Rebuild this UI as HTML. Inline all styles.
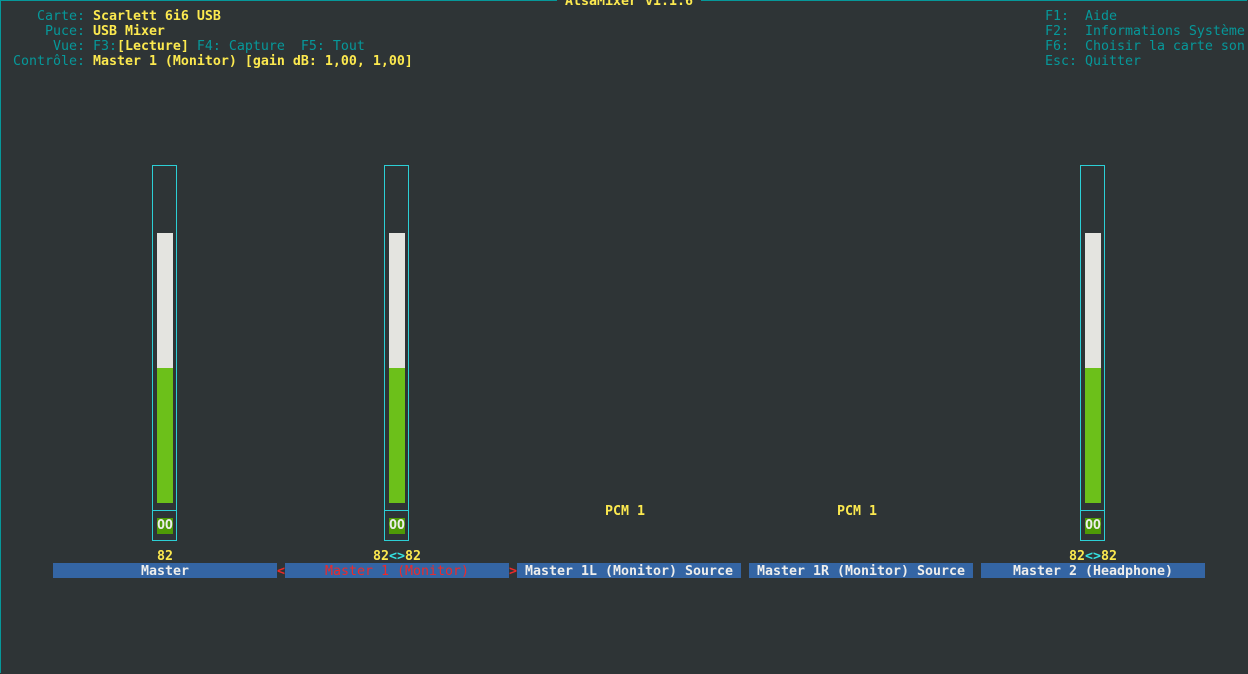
<!DOCTYPE html>
<html><head><meta charset="utf-8"><style>
body{margin:0;width:1248px;height:674px;background:#2e3436;overflow:hidden;position:relative;font-family:"DejaVu Sans Mono","Liberation Mono",monospace;font-size:13.29px;}
.t{position:absolute;white-space:pre;line-height:15px;height:15px;}
.c{color:#06989a}.y{color:#fce94f;font-weight:bold}.w{color:#eeeeec;font-weight:bold}
.frame{position:absolute;left:0;top:0;width:1246px;height:672px;border:1px solid #06989a;border-bottom:none;border-right:none}
.meter{position:absolute;top:165px;width:23px;height:374px;border:1px solid #2ccfd6}
.sep{position:absolute;left:0;right:0;top:344px;height:1px;background:#2ccfd6}
.wf{position:absolute;left:4px;width:16px;top:67px;height:135px;background:#e4e4e0}
.gf{position:absolute;left:4px;width:16px;top:202px;height:135px;background:#6cc01a}
.oo{position:absolute;left:4px;width:16px;top:352px;height:16px;background:#4e9a06;color:#eeeeec;font-weight:bold;text-align:center;line-height:16px;font-size:13px}
.bar{position:absolute;top:563px;width:224px;height:15px;background:#3465a4;color:#eeeeec;font-weight:bold;text-align:center;line-height:17px;white-space:pre;overflow:hidden}
</style></head><body>
<div class="frame"></div>
<div style="position:absolute;left:557px;top:0;width:144px;height:2px;background:#2e3436"></div>
<div class="t y" style="left:565px;top:-6px">AlsaMixer v1.1.6</div>
<div class="t" style="left:13px;top:9px"><span class="c">   Carte: </span><span class="y">Scarlett 6i6 USB</span></div>
<div class="t" style="left:13px;top:24px"><span class="c">    Puce: </span><span class="y">USB Mixer</span></div>
<div class="t" style="left:13px;top:39px"><span class="c">     Vue: F3:</span><span class="y">[Lecture]</span><span class="c"> F4: Capture  F5: Tout</span></div>
<div class="t" style="left:13px;top:54px"><span class="c">Contrôle: </span><span class="y">Master 1 (Monitor) [gain dB: 1,00, 1,00]</span></div>
<div class="t c" style="left:1045px;top:9px">F1:  Aide</div>
<div class="t c" style="left:1045px;top:24px">F2:  Informations Système</div>
<div class="t c" style="left:1045px;top:39px">F6:  Choisir la carte son</div>
<div class="t c" style="left:1045px;top:54px">Esc: Quitter</div>

<div class="meter" style="left:152px"><div class="wf"></div><div class="gf"></div><div class="sep"></div><div class="oo">OO</div></div>
<div class="meter" style="left:384px"><div class="wf"></div><div class="gf"></div><div class="sep"></div><div class="oo">OO</div></div>
<div class="meter" style="left:1080px"><div class="wf"></div><div class="gf"></div><div class="sep"></div><div class="oo">OO</div></div>

<div class="t y" style="left:605px;top:504px">PCM 1</div>
<div class="t y" style="left:837px;top:504px">PCM 1</div>

<div class="t y" style="left:157px;top:549px">82</div>
<div class="t y" style="left:373px;top:549px">82<span style="color:#34e2e2">&lt;&gt;</span>82</div>
<div class="t y" style="left:1069px;top:549px">82<span style="color:#34e2e2">&lt;&gt;</span>82</div>

<div class="bar" style="left:53px">Master</div>
<div class="t" style="left:277px;top:564px;color:#ef2929;font-weight:bold">&lt;</div>
<div class="bar" style="left:285px;color:#ef2929;font-weight:normal">Master 1 (Monitor)</div>
<div class="t" style="left:509px;top:564px;color:#ef2929;font-weight:bold">&gt;</div>
<div class="bar" style="left:517px">Master 1L (Monitor) Source</div>
<div class="bar" style="left:749px">Master 1R (Monitor) Source</div>
<div class="bar" style="left:981px">Master 2 (Headphone)</div>
</body></html>
